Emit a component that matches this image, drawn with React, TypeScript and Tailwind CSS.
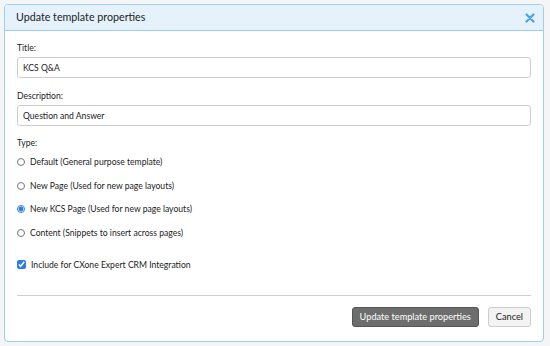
import { useState } from 'react';

const types = [
  { id: 'default', label: 'Default (General purpose template)' },
  { id: 'page', label: 'New Page (Used for new page layouts)' },
  { id: 'kcs', label: 'New KCS Page (Used for new page layouts)' },
  { id: 'content', label: 'Content (Snippets to insert across pages)' },
];

export default function App() {
  const [type, setType] = useState('kcs');
  const [crm, setCrm] = useState(true);

  return (
    <div className="w-[550px] h-[346px] bg-[#f3f5f7] p-[4px] pr-[6px] text-[#222] font-['Lato',sans-serif]">
      <div className="h-[338px] bg-white border border-[#9dcff3] rounded-[4px] flex flex-col overflow-hidden">
        {/* Header */}
        <div className="h-[26px] shrink-0 bg-[#e5f2fc] border-b border-[#9dcff3] flex items-center justify-between pl-[11px] pr-[8px]">
          <span className="text-[10.7px] text-[#222]">Update template properties</span>
          <svg width="10" height="10" viewBox="0 0 10 10" className="text-[#4aa3e6]">
            <path d="M1.5 1.5 L8.5 8.5 M8.5 1.5 L1.5 8.5" stroke="currentColor" strokeWidth="2.2" strokeLinecap="round" />
          </svg>
        </div>

        {/* Body */}
        <div className="flex-1 px-[12px] pt-[11px] text-[8.6px] leading-[12px]">
          <label className="block h-[12px] mb-[3px]">Title:</label>
          <input
            defaultValue="KCS Q&A"
            className="block w-full h-[21px] border border-[#ccc] rounded-[3px] px-[5px] text-[8.6px] outline-none"
          />

          <label className="block h-[12px] mt-[12px] mb-[3px]">Description:</label>
          <input
            defaultValue="Question and Answer"
            className="block w-full h-[21px] border border-[#ccc] rounded-[3px] px-[5px] text-[8.6px] outline-none"
          />

          <div className="h-[12px] mt-[11px] mb-[7px]">Type:</div>
          <div className="flex flex-col gap-[11.5px]">
            {types.map((t) => (
              <label key={t.id} className="flex items-center gap-[5px] h-[12px]">
                <input
                  type="radio"
                  name="type"
                  checked={type === t.id}
                  onChange={() => setType(t.id)}
                  className="w-[8px] h-[8px] m-0 accent-[#2f7de1]"
                />
                <span>{t.label}</span>
              </label>
            ))}
          </div>

          <label className="flex items-center gap-[5px] mt-[20px] h-[12px]">
            <input
              type="checkbox"
              checked={crm}
              onChange={() => setCrm(!crm)}
              className="w-[9px] h-[9px] m-0 accent-[#2f7de1]"
            />
            <span>Include for CXone Expert CRM Integration</span>
          </label>

          <div className="mt-[24px] border-t border-[#cfcfcf]" />

          <div className="flex justify-end gap-[9px] mt-[11px]">
            <button className="h-[20px] px-[7px] bg-[#6d6d6d] border border-[#555] rounded-[3px] text-white text-[9.2px]">
              Update template properties
            </button>
            <button className="h-[20px] px-[7px] bg-[#f3f3f3] border border-[#ccc] rounded-[3px] text-[#222] text-[9.2px]">
              Cancel
            </button>
          </div>
        </div>
      </div>
    </div>
  );
}
